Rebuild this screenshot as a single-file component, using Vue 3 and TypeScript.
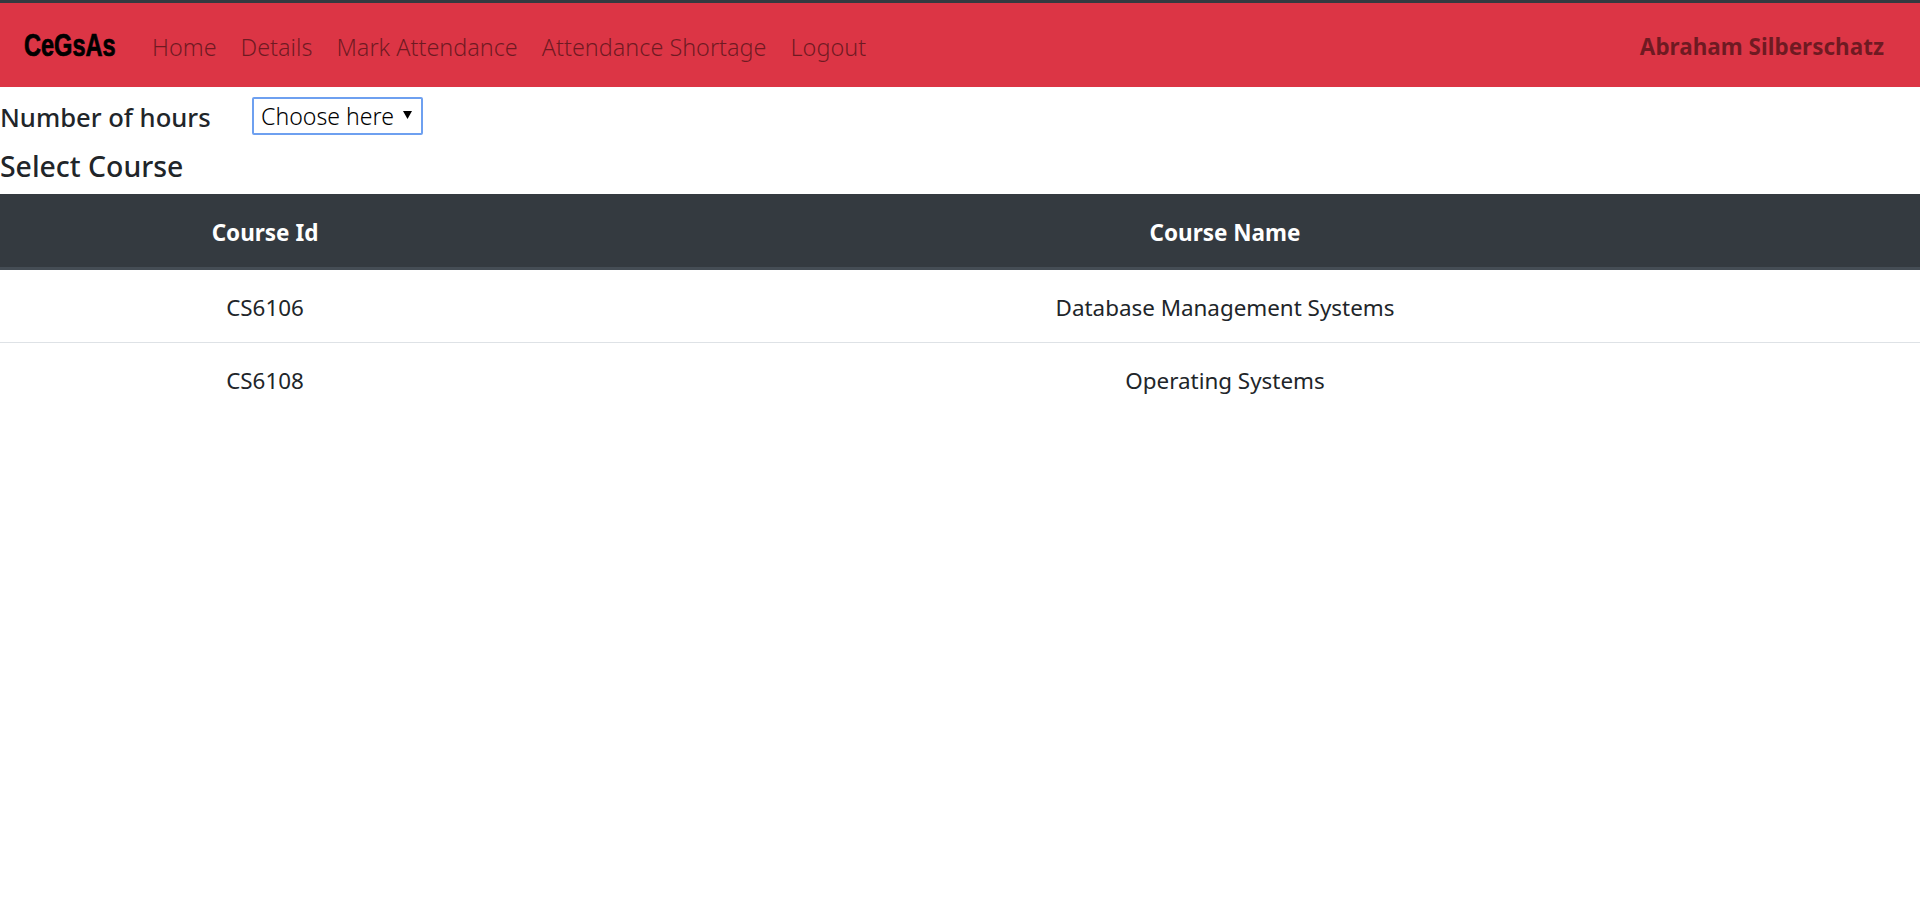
<script setup lang="ts">
interface Course {
  id: string
  name: string
}

const navLinks: string[] = ['Home', 'Details', 'Mark Attendance', 'Attendance Shortage', 'Logout']

const hourOptions: string[] = ['1', '2', '3']

const courses: Course[] = [
  { id: 'CS6106', name: 'Database Management Systems' },
  { id: 'CS6108', name: 'Operating Systems' }
]
</script>

<template>
  <div class="page">
    <nav class="navbar">
      <a class="navbar__brand" href="#">CeGsAs</a>
      <ul class="navbar__links">
        <li v-for="link in navLinks" :key="link">
          <a href="#">{{ link }}</a>
        </li>
      </ul>
      <span class="navbar__user">Abraham Silberschatz</span>
    </nav>

    <div class="hours">
      <label class="hours__label" for="hours">Number of hours</label>
      <div class="hours__select">
        <select id="hours">
          <option>Choose here</option>
          <option v-for="hour in hourOptions" :key="hour">{{ hour }}</option>
        </select>
        <svg class="hours__arrow" width="9" height="8" viewBox="0 0 9 8" aria-hidden="true">
          <path d="M0 0h9L4.5 8z" fill="#000" />
        </svg>
      </div>
    </div>

    <h2 class="course-title">Select Course</h2>

    <table class="courses">
      <colgroup>
        <col class="courses__id" />
        <col />
      </colgroup>
      <thead>
        <tr>
          <th>Course Id</th>
          <th>Course Name</th>
        </tr>
      </thead>
      <tbody>
        <tr v-for="course in courses" :key="course.id">
          <td>{{ course.id }}</td>
          <td>{{ course.name }}</td>
        </tr>
      </tbody>
    </table>
  </div>
</template>

<style>
html,
body {
  background: #ffffff;
  margin: 0;
}
</style>

<style scoped>
.page {
  color: #212529;
  font-family: 'Noto Sans', 'Open Sans', sans-serif;
  min-height: 915px;
}

.navbar {
  align-items: center;
  background: #dc3545;
  border-top: 3px solid #343a40;
  box-sizing: border-box;
  display: flex;
  height: 87px;
  padding: 2px 36px 0 24px;
}

.navbar__brand {
  -webkit-text-stroke: 0.7px #000000;
  color: #000000;
  flex: none;
  font-family: 'Liberation Sans', sans-serif;
  font-size: 31px;
  font-weight: 700;
  text-decoration: none;
  transform: scaleX(0.76);
  transform-origin: left center;
  white-space: nowrap;
  width: 128px;
}

.navbar__links {
  display: flex;
  flex: 1;
  gap: 24px;
  list-style: none;
  margin: 0;
  padding: 1px 0 0;
}

.navbar__links a {
  color: rgba(0, 0, 0, 0.5);
  font-size: 23.4px;
  font-weight: 350;
  text-decoration: none;
}

.navbar__user {
  color: rgba(0, 0, 0, 0.5);
  font-size: 22.5px;
  font-weight: 700;
}

.hours {
  align-items: flex-start;
  display: flex;
  padding-top: 10px;
}

.hours__label {
  font-size: 25.6px;
  font-weight: 550;
  line-height: 32px;
  margin-top: 5px;
  width: 252px;
}

.hours__select {
  position: relative;
}

.hours__select select {
  appearance: none;
  background: #ffffff;
  border: 2px solid #6ea0f0;
  border-radius: 2px;
  box-sizing: border-box;
  color: #000000;
  display: block;
  font-family: inherit;
  font-size: 23.1px;
  font-weight: 350;
  height: 38px;
  padding: 0 0 0 7px;
  width: 171px;
}

.hours__arrow {
  position: absolute;
  right: 11px;
  top: 14px;
}

.course-title {
  font-size: 28.4px;
  font-weight: 550;
  line-height: 34px;
  margin: 0;
  padding: 14px 0 11px;
}

.courses {
  border-collapse: collapse;
  color: #212529;
  font-size: 22.4px;
  font-weight: 400;
  table-layout: fixed;
  width: 100%;
}

.courses__id {
  width: 530px;
}

.courses th {
  background: #343a40;
  border-bottom: 3px solid #454d55;
  color: #ffffff;
  font-size: 22.5px;
  font-weight: 700;
  height: 69px;
  padding: 4px 0 0;
  text-align: center;
}

.courses td {
  border-bottom: 1px solid #dee2e6;
  height: 70px;
  padding: 2px 0 0;
  text-align: center;
}

.courses tbody tr:last-child td {
  border-bottom: 0;
}
</style>
